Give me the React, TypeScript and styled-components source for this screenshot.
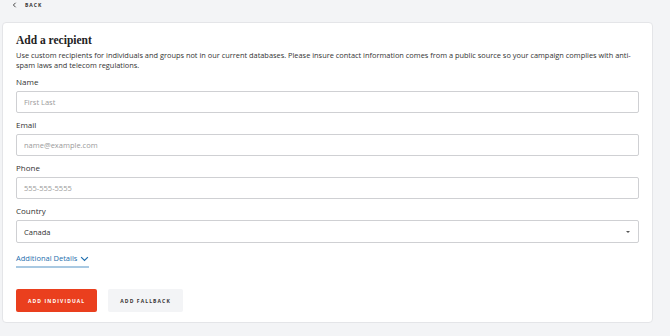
import { FC } from 'react';
import styled, { createGlobalStyle } from 'styled-components';

const GlobalStyle = createGlobalStyle`
  html, body {
    margin: 0;
    padding: 0;
    background-color: #f3f4f6;
    font-family: 'Open Sans', 'Noto Sans', sans-serif;
    color: #333333;
  }
`;

const fields = [
  { label: 'Name', placeholder: 'First Last' },
  { label: 'Email', placeholder: 'name@example.com' },
  { label: 'Phone', placeholder: '555-555-5555' },
];

const AddRecipient: FC = () => {
  return (
    <>
      <GlobalStyle />
      <Page>
        <BackLink href="#">
          <BackArrow viewBox="0 0 6 8">
            <path d="M4.5 1 L1.5 4 L4.5 7" />
          </BackArrow>
          BACK
        </BackLink>
        <Card>
          <Title>Add a recipient</Title>
          <Description>
            Use custom recipients for individuals and groups not in our current
            databases. Please insure contact information comes from a public
            source so your campaign complies with anti-spam laws and telecom
            regulations.
          </Description>
          <Form>
            {fields.map((f) => (
              <Field key={f.label}>
                <Label>{f.label}</Label>
                <TextInput placeholder={f.placeholder} />
              </Field>
            ))}
            <Field>
              <Label>Country</Label>
              <SelectBox>
                <span>Canada</span>
                <Caret />
              </SelectBox>
            </Field>
          </Form>
          <DetailsToggle>
            Additional Details
            <Chevron viewBox="0 0 12 8">
              <path d="M1.5 1.5 L6 6 L10.5 1.5" />
            </Chevron>
          </DetailsToggle>
          <Actions>
            <ActionButton primary>ADD INDIVIDUAL</ActionButton>
            <ActionButton>ADD FALLBACK</ActionButton>
          </Actions>
        </Card>
      </Page>
    </>
  );
};

const Page = styled.div`
  padding: 0 17px 13px 2px;
`;

const BackLink = styled.a`
  display: flex;
  align-items: center;
  gap: 8px;
  height: 9px;
  padding-left: 10px;
  margin-bottom: 13px;
  font-size: 5px;
  font-weight: 700;
  letter-spacing: 1px;
  color: #333333;
  text-decoration: none;
`;

const BackArrow = styled.svg`
  width: 5px;
  height: 6px;
  fill: none;
  stroke: #333333;
  stroke-width: 1.2;
`;

const Card = styled.div`
  background-color: #ffffff;
  border: 1px solid #e4e5e8;
  border-radius: 4px;
  padding: 11px 13px 10px;
`;

const Title = styled.h1`
  margin: 0;
  font-family: 'Liberation Serif', serif;
  font-size: 11.5px;
  line-height: 13px;
  font-weight: 700;
  color: #222222;
`;

const Description = styled.p`
  margin: 3px 0 0;
  font-size: 7.4px;
  line-height: 10px;
  color: #333333;
`;

const Form = styled.div`
  display: flex;
  flex-direction: column;
  gap: 6px;
  margin-top: 6px;
`;

const Field = styled.div`
  display: flex;
  flex-direction: column;
  gap: 3px;
`;

const Label = styled.label`
  font-size: 8px;
  line-height: 12px;
  color: #333333;
`;

const TextInput = styled.input`
  box-sizing: border-box;
  height: 22px;
  width: 100%;
  padding: 0 7px;
  border: 1px solid #cfd0d3;
  border-radius: 2px;
  font-family: 'Open Sans', sans-serif;
  font-size: 7.5px;
  color: #333333;
  outline: none;
  &::placeholder {
    color: #9b9b9b;
  }
`;

const SelectBox = styled.div`
  box-sizing: border-box;
  height: 23px;
  display: flex;
  align-items: center;
  justify-content: space-between;
  padding: 0 8px 0 7px;
  border: 1px solid #cfd0d3;
  border-radius: 2px;
  font-size: 7.5px;
  color: #333333;
`;

const Caret = styled.span`
  width: 0;
  height: 0;
  border-left: 2px solid transparent;
  border-right: 2px solid transparent;
  border-top: 2.5px solid #555555;
`;

const DetailsToggle = styled.button`
  align-self: flex-start;
  display: inline-flex;
  align-items: center;
  gap: 3px;
  margin-top: 10px;
  padding: 0 0 2px;
  background: none;
  border: none;
  border-bottom: 2px solid #a9c9e2;
  font-family: 'Open Sans', sans-serif;
  font-size: 7.5px;
  line-height: 11px;
  color: #1f6fae;
  cursor: pointer;
`;

const Chevron = styled.svg`
  width: 9px;
  height: 6px;
  fill: none;
  stroke: #1f6fae;
  stroke-width: 1.6;
`;

const Actions = styled.div`
  display: flex;
  gap: 11px;
  margin-top: 21px;
`;

const ActionButton = styled.button<{ primary?: boolean }>`
  height: 23px;
  padding: 0 12px;
  border: none;
  border-radius: 2px;
  background-color: ${(p) => (p.primary ? '#ea3f1e' : '#f3f4f6')};
  color: ${(p) => (p.primary ? '#ffffff' : '#333333')};
  font-family: 'Open Sans', sans-serif;
  font-size: 5px;
  font-weight: 700;
  letter-spacing: 1.1px;
  cursor: pointer;
`;

export default AddRecipient;
